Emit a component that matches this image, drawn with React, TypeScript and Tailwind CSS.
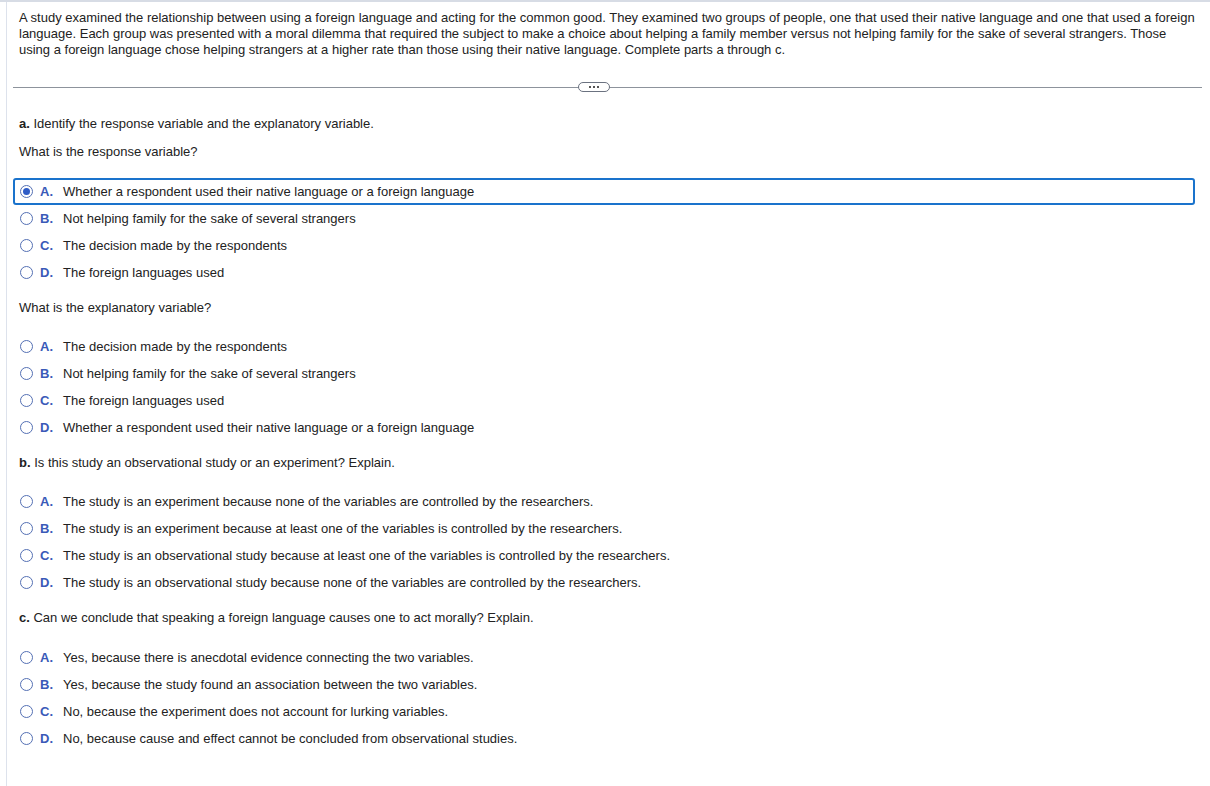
import React from "react";

type Opt = { l: string; t: string };

const Radio = ({ on }: { on?: boolean }) => (
  <span className="flex h-[13px] w-[13px] shrink-0 items-center justify-center rounded-full border border-[#5470b4] bg-white">
    {on && <span className="h-[7px] w-[7px] rounded-full bg-[#2f5cc6]" />}
  </span>
);

const Options = ({ opts, sel, mt }: { opts: Opt[]; sel?: number; mt: string }) => (
  <div className={`${mt} -ml-[6px] w-[1182px]`}>
    {opts.map((o, i) => (
      <div
        key={o.l}
        className={`flex h-[27px] items-center rounded-[3px] border-2 pl-[5px] ${
          i === sel ? "border-[#1a73cc]" : "border-transparent"
        }`}
      >
        <Radio on={i === sel} />
        <span className="ml-[7px] w-[23px] font-bold text-[#3a5ab8]">{o.l}.</span>
        <span>{o.t}</span>
      </div>
    ))}
  </div>
);

export default function App() {
  return (
    <div
      className="min-h-[786px] border-t-2 border-[#d7dce5] bg-white pl-[6px] text-[13px] leading-[16px] text-[#222]"
      style={{ fontFamily: '"Liberation Sans", Arial, sans-serif' }}
    >
      <div className="min-h-[784px] border-l border-[#dde2ec] pl-[12px] pt-[8px]">
        <p className="w-[1180px]">
          A study examined the relationship between using a foreign language and acting for the common good. They examined two groups of people, one that used their native language and one that used a foreign language. Each group was presented with a moral dilemma that required the subject to make a choice about helping a family member versus not helping family for the sake of several strangers. Those using a foreign language chose helping strangers at a higher rate than those using their native language. Complete parts a through c.
        </p>

        <div className="relative -ml-[6px] mt-[29px] h-px w-[1189px] bg-[#8d939c]">
          <div className="absolute left-[565px] top-[-5px] flex h-[10px] w-[32px] items-center justify-center gap-[2px] rounded-full border border-[#6b7280] bg-white">
            <span className="h-[2px] w-[2px] bg-[#555]" />
            <span className="h-[2px] w-[2px] bg-[#555]" />
            <span className="h-[2px] w-[2px] bg-[#555]" />
          </div>
        </div>

        <p className="mt-[28px]">
          <b>a.</b> Identify the response variable and the explanatory variable.
        </p>
        <p className="mt-[12px]">What is the response variable?</p>
        <Options
          mt="mt-[18px]"
          sel={0}
          opts={[
            { l: "A", t: "Whether a respondent used their native language or a foreign language" },
            { l: "B", t: "Not helping family for the sake of several strangers" },
            { l: "C", t: "The decision made by the respondents" },
            { l: "D", t: "The foreign languages used" },
          ]}
        />
        <p className="mt-[14px]">What is the explanatory variable?</p>
        <Options
          mt="mt-[17px]"
          opts={[
            { l: "A", t: "The decision made by the respondents" },
            { l: "B", t: "Not helping family for the sake of several strangers" },
            { l: "C", t: "The foreign languages used" },
            { l: "D", t: "Whether a respondent used their native language or a foreign language" },
          ]}
        />
        <p className="mt-[14px]">
          <b>b.</b> Is this study an observational study or an experiment? Explain.
        </p>
        <Options
          mt="mt-[17px]"
          opts={[
            { l: "A", t: "The study is an experiment because none of the variables are controlled by the researchers." },
            { l: "B", t: "The study is an experiment because at least one of the variables is controlled by the researchers." },
            { l: "C", t: "The study is an observational study because at least one of the variables is controlled by the researchers." },
            { l: "D", t: "The study is an observational study because none of the variables are controlled by the researchers." },
          ]}
        />
        <p className="mt-[14px]">
          <b>c.</b> Can we conclude that speaking a foreign language causes one to act morally? Explain.
        </p>
        <Options
          mt="mt-[18px]"
          opts={[
            { l: "A", t: "Yes, because there is anecdotal evidence connecting the two variables." },
            { l: "B", t: "Yes, because the study found an association between the two variables." },
            { l: "C", t: "No, because the experiment does not account for lurking variables." },
            { l: "D", t: "No, because cause and effect cannot be concluded from observational studies." },
          ]}
        />
      </div>
    </div>
  );
}
